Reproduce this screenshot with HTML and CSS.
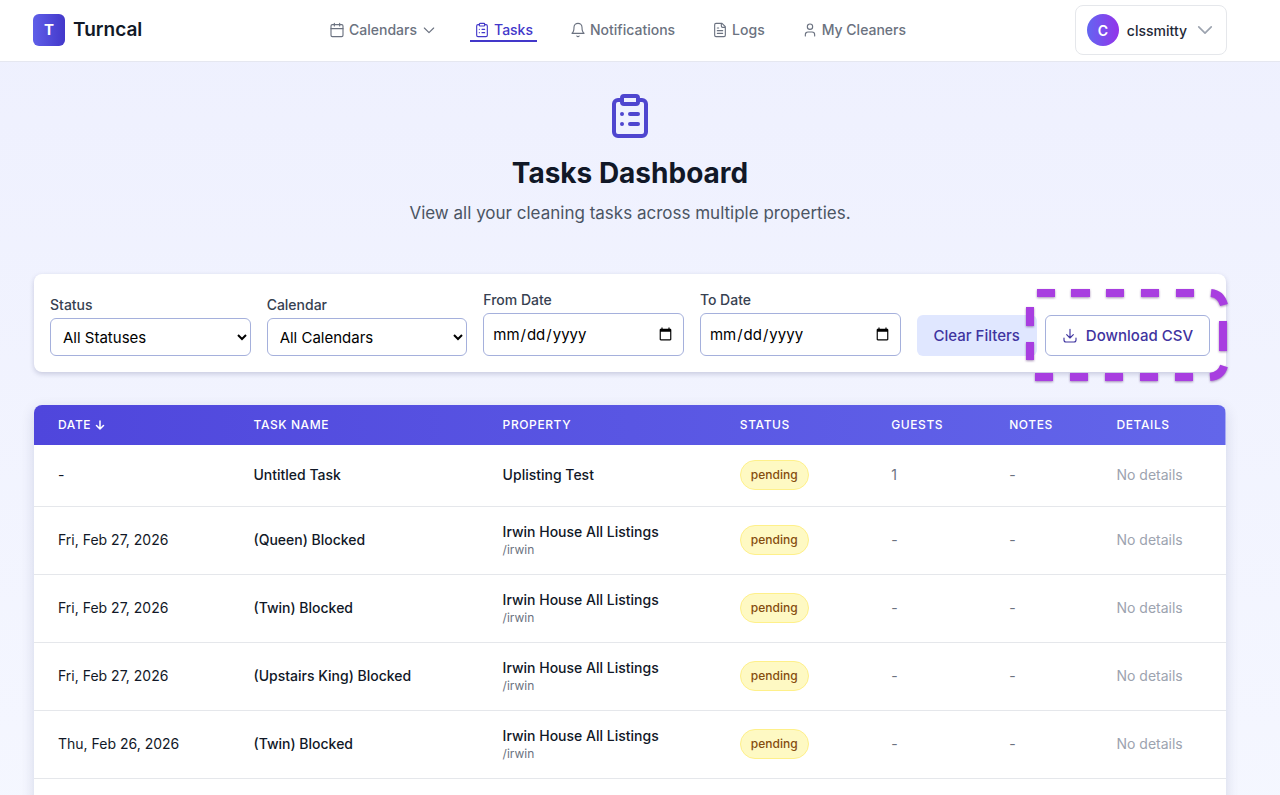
FILE: index.html
```
<!DOCTYPE html>
<html lang="en">
  <head>
    <meta charset="utf-8"/>
    <title>Turncal - Tasks</title>
    <link rel="stylesheet" href="styles.css">
  </head>
  <body>
    <!-- shared icons -->
    <svg class="sprite" aria-hidden="true">
      <symbol id="icon-clipboard" viewBox="0 0 24 24">
        <rect x="8" y="2" width="8" height="4" rx="1"/>
        <path d="M16 4h2a2 2 0 0 1 2 2v14a2 2 0 0 1-2 2H6a2 2 0 0 1-2-2V6a2 2 0 0 1 2-2h2M12 11h4M12 16h4M8 11h.01M8 16h.01"/>
      </symbol>
    </svg>

    <header class="header">
      <a class="logo" href="#">
        <span class="logo-mark">T</span>
        <span class="logo-name">Turncal</span>
      </a>
      <nav class="nav">
        <button class="nav-item" type="button">
          <svg class="icon" viewBox="0 0 24 24"><rect x="3" y="4" width="18" height="18" rx="2"/><path d="M8 2v4M16 2v4M3 10h18"/></svg>
          Calendars
          <svg class="icon" viewBox="0 0 24 24"><path d="M5 9l7 7 7-7"/></svg>
        </button>
        <a class="nav-item active" href="#">
          <svg class="icon"><use href="#icon-clipboard"/></svg>
          Tasks
        </a>
        <a class="nav-item" href="#">
          <svg class="icon" viewBox="0 0 24 24"><path d="M6 8a6 6 0 0 1 12 0c0 7 3 9 3 9H3s3-2 3-9M10.3 21a1.94 1.94 0 0 0 3.4 0"/></svg>
          Notifications
        </a>
        <a class="nav-item" href="#">
          <svg class="icon" viewBox="0 0 24 24"><path d="M15 2H6a2 2 0 0 0-2 2v16a2 2 0 0 0 2 2h12a2 2 0 0 0 2-2V7ZM14 2v4a2 2 0 0 0 2 2h4M10 9H8M16 13H8M16 17H8"/></svg>
          Logs
        </a>
        <a class="nav-item" href="#">
          <svg class="icon" viewBox="0 0 24 24"><path d="M19 21v-2a4 4 0 0 0-4-4H9a4 4 0 0 0-4 4v2"/><circle cx="12" cy="7" r="4"/></svg>
          My Cleaners
        </a>
      </nav>
      <button class="user" type="button">
        <span class="avatar">C</span>
        clssmitty
        <svg class="user-arrow" viewBox="0 0 24 24"><path d="M19.5 8.25l-7.5 7.5-7.5-7.5"/></svg>
      </button>
    </header>

    <main class="main">
      <div class="intro">
        <svg class="intro-icon"><use href="#icon-clipboard"/></svg>
        <h1>Tasks Dashboard</h1>
        <p>View all your cleaning tasks across multiple properties.</p>
      </div>

      <form class="filters">
        <div class="field">
          <label for="status">Status</label>
          <select id="status"><option>All Statuses</option></select>
        </div>
        <div class="field">
          <label for="calendar">Calendar</label>
          <select id="calendar"><option>All Calendars</option></select>
        </div>
        <div class="field">
          <label for="from">From Date</label>
          <input id="from" type="date">
        </div>
        <div class="field">
          <label for="to">To Date</label>
          <input id="to" type="date">
        </div>
        <div class="actions">
          <button class="btn btn-clear" type="reset">Clear Filters</button>
          <div class="download">
            <button class="btn btn-outline" type="button">
              <svg class="icon" viewBox="0 0 24 24"><path d="M3 15v3a3 3 0 0 0 3 3h12a3 3 0 0 0 3-3v-3M7 10l5 5 5-5M12 15V2"/></svg>
              Download CSV
            </button>
            <!-- dashed highlight round the download button -->
            <svg class="highlight" viewBox="0 0 202 94" aria-hidden="true">
              <path d="M11 4h18M45 4h19M80 4h18M115 4h18M150 4h18M185 4q10 1 13 12M197 32v30M198 77q-3 10-14 11M167 88h-18M132 88h-18M97 88h-18M62 88h-18M27 88h-18M4 18v19M4 53v18"/>
            </svg>
          </div>
        </div>
      </form>

      <div class="table-card">
        <table class="tasks">
          <colgroup>
            <col class="col-date"><col class="col-task"><col class="col-property"><col class="col-status"><col class="col-guests"><col class="col-notes"><col class="col-details">
          </colgroup>
          <thead>
            <tr>
              <th>Date <svg class="sort" viewBox="0 0 10 10"><path d="M5 1v8M1.500 5.500L5 9l3.500-3.500"/></svg></th>
              <th>Task Name</th>
              <th>Property</th>
              <th>Status</th>
              <th>Guests</th>
              <th>Notes</th>
              <th>Details</th>
            </tr>
          </thead>
          <tbody>
            <tr class="short">
              <td>-</td>
              <td class="strong">Untitled Task</td>
              <td class="strong">Uplisting Test</td>
              <td><span class="badge">pending</span></td>
              <td class="muted">1</td>
              <td class="muted">-</td>
              <td class="faint">No details</td>
            </tr>
            <tr>
              <td>Fri, Feb 27, 2026</td>
              <td class="strong">(Queen) Blocked</td>
              <td class="strong">Irwin House All Listings<span class="slug">/irwin</span></td>
              <td><span class="badge">pending</span></td>
              <td class="muted">-</td>
              <td class="muted">-</td>
              <td class="faint">No details</td>
            </tr>
            <tr>
              <td>Fri, Feb 27, 2026</td>
              <td class="strong">(Twin) Blocked</td>
              <td class="strong">Irwin House All Listings<span class="slug">/irwin</span></td>
              <td><span class="badge">pending</span></td>
              <td class="muted">-</td>
              <td class="muted">-</td>
              <td class="faint">No details</td>
            </tr>
            <tr>
              <td>Fri, Feb 27, 2026</td>
              <td class="strong">(Upstairs King) Blocked</td>
              <td class="strong">Irwin House All Listings<span class="slug">/irwin</span></td>
              <td><span class="badge">pending</span></td>
              <td class="muted">-</td>
              <td class="muted">-</td>
              <td class="faint">No details</td>
            </tr>
            <tr>
              <td>Thu, Feb 26, 2026</td>
              <td class="strong">(Twin) Blocked</td>
              <td class="strong">Irwin House All Listings<span class="slug">/irwin</span></td>
              <td><span class="badge">pending</span></td>
              <td class="muted">-</td>
              <td class="muted">-</td>
              <td class="faint">No details</td>
            </tr>
            <tr>
              <td colspan="7"></td>
            </tr>
          </tbody>
        </table>
      </div>
    </main>
  </body>
</html>
```

FILE: styles.css
```
* {
  box-sizing: border-box;
}
body {
  margin: 0;
  min-height: 100vh;
  background: linear-gradient(#eef0fe, #f5f7ff);
  font-family: Inter, "Liberation Sans", sans-serif;
  font-size: 14px;
  line-height: 20px;
  color: #111827;
}
button, input, select {
  font-family: inherit;
}
a {
  color: inherit;
  text-decoration: none;
}
svg {
  fill: none;
  stroke: currentColor;
  stroke-width: 2;
  stroke-linecap: round;
  stroke-linejoin: round;
  flex: none;
}
.sprite {
  display: none;
}
.icon {
  width: 16px;
  height: 16px;
  stroke-width: 1.7;
}

/* header */
.header {
  display: flex;
  align-items: center;
  justify-content: space-between;
  padding: 5px 53px 6px 33px;
  background: #fff;
  border-bottom: 1px solid #e5e7f0;
}
.logo {
  display: flex;
  align-items: center;
  gap: 8px;
}
.logo-mark {
  display: flex;
  align-items: center;
  justify-content: center;
  width: 32px;
  height: 32px;
  border-radius: 6px;
  background: linear-gradient(90deg, #5f5fe8, #4338ca);
  color: #fff;
  font-size: 15px;
  font-weight: 700;
}
.logo-name {
  font-size: 19px;
  font-weight: 600;
}
.nav {
  display: flex;
  gap: 29px;
  margin-left: 18px;
}
.nav-item {
  display: flex;
  align-items: center;
  gap: 4px;
  padding: 2px 4px 0;
  border: 0;
  border-bottom: 2px solid transparent;
  background: none;
  color: #6b7280;
  font-size: 14px;
  font-weight: 500;
  line-height: 20px;
}
.nav-item.active {
  color: #4338ca;
  border-bottom-color: #4338ca;
}
.user {
  display: flex;
  align-items: center;
  gap: 8px;
  padding: 8px 11px;
  border: 1px solid #e5e7eb;
  border-radius: 8px;
  background: #fff;
  color: #1f2937;
  font-size: 14px;
  font-weight: 500;
}
.avatar {
  display: flex;
  align-items: center;
  justify-content: center;
  width: 32px;
  height: 32px;
  border-radius: 50%;
  background: linear-gradient(90deg, #6366f1, #9333ea);
  color: #fff;
  font-weight: 600;
}
.user-arrow {
  width: 20px;
  height: 20px;
  color: #9ca3af;
}

/* page */
.main {
  padding: 30px 54px 0 34px;
}
.intro {
  display: flex;
  flex-direction: column;
  align-items: center;
  margin-bottom: 47px;
}
.intro-icon {
  width: 48px;
  height: 48px;
  color: #4f46cf;
}
.intro h1 {
  margin: 15px 0 8px;
  font-size: 28px;
  line-height: 36px;
}
.intro p {
  margin: 0;
  font-size: 17px;
  line-height: 28px;
  color: #4b5563;
}

/* filters */
.filters {
  display: flex;
  align-items: flex-end;
  gap: 16px;
  padding: 16px;
  border-radius: 8px;
  background: #fff;
  box-shadow: 0 2px 5px rgba(30, 35, 90, 0.2);
}
.field {
  flex: 1;
  min-width: 0;
}
.field label {
  display: block;
  margin-bottom: 3px;
  color: #374151;
  font-weight: 500;
}
.field select, .field input {
  display: block;
  width: 100%;
  height: 38px;
  border: 1px solid #a5b0dc;
  border-radius: 6px;
  background: #fff;
  color: #000;
  font-size: 15px;
}
.field select {
  padding: 0 8px;
}
.field input {
  height: 43px;
  padding: 0 8px;
}
.actions {
  display: flex;
  gap: 8px;
}
.btn {
  display: flex;
  align-items: center;
  gap: 8px;
  height: 41px;
  padding: 0 16px;
  border: 1px solid transparent;
  border-radius: 6px;
  color: #3f349f;
  font-size: 15px;
  font-weight: 500;
  white-space: nowrap;
}
.btn-clear {
  background: #e0e7ff;
}
.btn-outline {
  border-color: #a5b0dc;
  background: #fff;
}
.download {
  position: relative;
}
.highlight {
  position: absolute;
  left: -19px;
  top: -26px;
  width: 202px;
  height: 94px;
  stroke: #a83ee0;
  stroke-width: 8;
  stroke-linecap: butt;
  filter: drop-shadow(0 1px 1px rgba(80, 30, 110, 0.5));
  pointer-events: none;
}

/* table */
.table-card {
  margin-top: 33px;
  border-radius: 8px;
  background: #fff;
  box-shadow: 0 4px 14px rgba(30, 35, 90, 0.14);
  overflow: hidden;
}
.tasks {
  width: 100%;
  table-layout: fixed;
  border-collapse: collapse;
}
.col-date { width: 16.4%; }
.col-task { width: 20.9%; }
.col-property { width: 19.9%; }
.col-status { width: 12.7%; }
.col-guests { width: 9.9%; }
.col-notes { width: 9%; }
.col-details { width: 11.2%; }
.tasks thead {
  background: linear-gradient(90deg, #4f46dc, #6366ea);
}
.tasks th {
  height: 40px;
  padding: 0 24px;
  color: #fff;
  font-size: 12px;
  font-weight: 500;
  letter-spacing: 0.05em;
  text-align: left;
  text-transform: uppercase;
  white-space: nowrap;
}
.sort {
  width: 10px;
  height: 10px;
  stroke-width: 1.5;
  vertical-align: -1px;
}
.tasks td {
  height: 68px;
  padding: 0 24px;
  border-bottom: 1px solid #e5e7eb;
  white-space: nowrap;
}
.tasks .short td {
  height: 61px;
}
.tasks .strong {
  font-weight: 500;
}
.tasks .muted {
  color: #6b7280;
}
.tasks .faint {
  color: #9ca3af;
}
.slug {
  display: block;
  color: #6b7280;
  font-size: 12px;
  font-weight: 400;
  line-height: 16px;
}
.badge {
  display: inline-block;
  padding: 4px 10px;
  border: 1px solid #fef08a;
  border-radius: 15px;
  background: #fef9c3;
  color: #854d0e;
  font-size: 12px;
  font-weight: 500;
}
```
